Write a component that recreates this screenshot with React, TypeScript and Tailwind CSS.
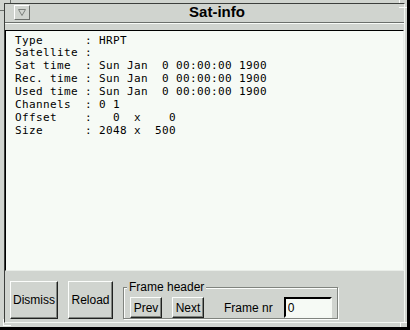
import React from 'react';

const lines = [
  'Type      : HRPT',
  'Satellite : ',
  'Sat time  : Sun Jan  0 00:00:00 1900',
  'Rec. time : Sun Jan  0 00:00:00 1900',
  'Used time : Sun Jan  0 00:00:00 1900',
  'Channels  : 0 1',
  'Offset    :   0  x    0',
  'Size      : 2048 x  500',
];

const Btn = ({ label, className }: { label: string; className: string }) => (
  <button
    className={`flex items-center justify-center border border-t-[#fbfdfb] border-l-[#fbfdfb] border-r-[#202220] border-b-[#202220] bg-[#d0d4cf] text-[12px] leading-[14px] shadow-[inset_-1px_-1px_0_#80847f] ${className}`}
  >
    {label}
  </button>
);

export default function App() {
  return (
    <div className="h-[330px] w-[410px] bg-black pr-[3px] pb-[3px] font-['Liberation_Sans',Arial,sans-serif] text-black">
      <div className="relative h-full bg-[#d0d4cf] pt-[3px] pr-[2px] pb-[4px] pl-[4px]">
        {/* frame corner notches */}
        <div className="absolute top-0 left-[10px] h-[3px] w-px bg-[#6b6f6b]" />
        <div className="absolute top-[10px] left-0 h-px w-[4px] bg-[#6b6f6b]" />
        <div className="absolute top-0 left-[399px] h-[3px] w-px bg-[#fbfdfb]" />
        <div className="absolute top-[7px] left-[399px] h-px w-[8px] bg-[#fbfdfb]" />
        <div className="absolute top-[319px] left-[3px] h-[7px] w-px bg-[#fbfdfb]" />
        <div className="absolute top-[325px] left-[3px] h-px w-[8px] bg-[#fbfdfb]" />
        <div className="absolute top-[322px] left-[400px] h-[5px] w-px bg-[#fbfdfb]" />
        <div className="absolute top-[322px] left-[400px] h-px w-[7px] bg-[#fbfdfb]" />

        <div className="flex h-full flex-col border border-t-[#3c3f3c] border-l-[#3c3f3c] border-r-[#f2f6f1] border-b-[#f2f6f1]">
          {/* title bar */}
          <div className="flex h-[19px] items-start border-b border-[#6b6f6b]">
            <div className="mt-[1px] ml-[9px] flex h-[15px] w-[16px] items-center justify-center border border-t-white border-l-white border-r-[#6b6f6b] border-b-[#6b6f6b]">
              <svg width="8" height="7" viewBox="0 0 8 7">
                <path d="M0.5 0.5H7.5L4 6.5Z" fill="none" stroke="#7b7f7b" />
              </svg>
            </div>
            <div className="flex-1 text-center text-[15px] leading-[15px] font-bold">Sat-info</div>
          </div>
          <div className="h-px bg-[#f8fbf7]" />

          <div className="flex flex-1 flex-col pt-[6px]">
            {/* info text */}
            <div className="flex-1 border border-t-black border-l-black border-r-[#e9ede8] border-b-[#e9ede8] bg-[#f6faf5] pt-[3.5px] pl-[9px] font-['DejaVu_Sans_Mono',monospace] text-[11px] leading-[12.86px] tracking-[0.38px] whitespace-pre">
              {lines.map((l) => (
                <div key={l}>{l}</div>
              ))}
            </div>

            {/* buttons */}
            <div className="flex h-[51px] items-start gap-[10px] pt-[10px] pl-[5px]">
              <Btn label="Dismiss" className="h-[38px] w-[48px]" />
              <Btn label="Reload" className="h-[38px] w-[45px]" />
              <fieldset className="w-[215px] border border-[#80847f] pr-[5px] pl-[3px] shadow-[1px_1px_0_#fbfdfb,inset_1px_1px_0_#fbfdfb]">
                <legend className="bg-[#d0d4cf] px-[2px] text-[12px] leading-[12px]">Frame header</legend>
                <div className="mt-[4px] flex items-center">
                  <Btn label="Prev" className="ml-[3px] h-[21px] w-[32px]" />
                  <Btn label="Next" className="ml-[10px] h-[21px] w-[32px]" />
                  <span className="ml-[20px] text-[12px] leading-[14px]">Frame nr</span>
                  <input
                    value="0"
                    readOnly
                    className="ml-[11px] h-[21px] w-[48px] border-2 border-t-black border-l-black border-r-[#f4f8f3] border-b-[#f4f8f3] bg-[#f6faf5] pl-[2px] text-[12px] outline-none"
                  />
                </div>
              </fieldset>
            </div>
          </div>
        </div>
      </div>
    </div>
  );
}
